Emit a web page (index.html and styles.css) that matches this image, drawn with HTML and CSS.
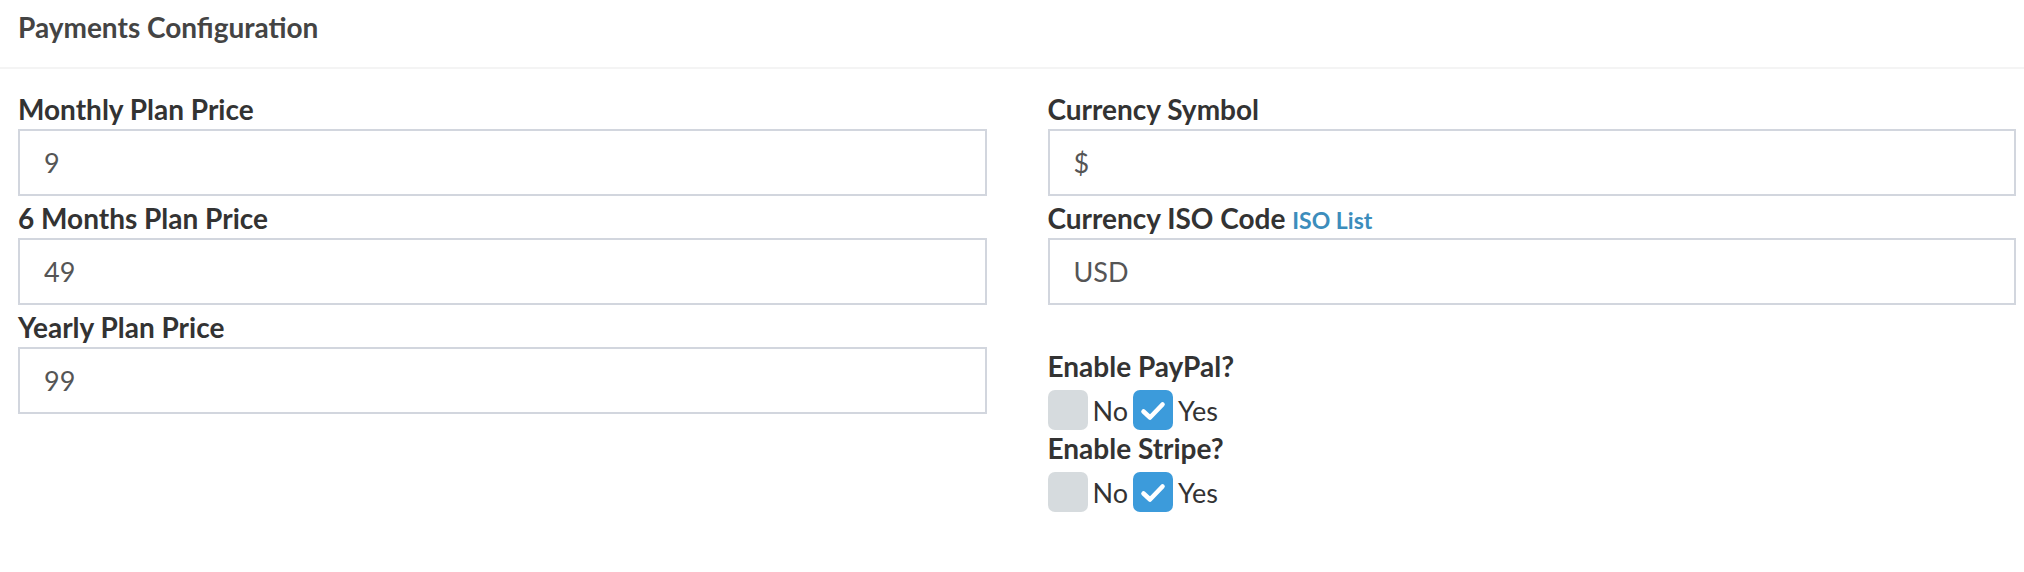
FILE: index.html
```html
<!DOCTYPE html>
<html>
<head>
<meta charset="utf-8">
<link rel="stylesheet" href="styles.css">
</head>
<body>
<div class="box">
  <div class="box-header">Payments Configuration</div>
  <div class="form">
    <div class="col">
      <label class="lbl">Monthly Plan Price</label>
      <div class="input">9</div>
      <label class="lbl">6 Months Plan Price</label>
      <div class="input">49</div>
      <label class="lbl">Yearly Plan Price</label>
      <div class="input">99</div>
    </div>
    <div class="col">
      <label class="lbl">Currency Symbol</label>
      <div class="input">$</div>
      <label class="lbl">Currency ISO Code <a class="link" href="#">ISO List</a></label>
      <div class="input">USD</div>
      <div class="checks">
        <label class="lbl lbl-check">Enable PayPal?</label>
        <div class="opts">
          <span class="cb"></span><span class="opt">No</span>
          <span class="cb on"><svg viewBox="0 0 40 40" width="40" height="40"><path d="M10.5 21.5 L17 27.5 L29.5 14.5" fill="none" stroke="#fff" stroke-width="4.6" stroke-linecap="round" stroke-linejoin="round"/></svg></span><span class="opt">Yes</span>
        </div>
        <label class="lbl lbl-check">Enable Stripe?</label>
        <div class="opts">
          <span class="cb"></span><span class="opt">No</span>
          <span class="cb on"><svg viewBox="0 0 40 40" width="40" height="40"><path d="M10.5 21.5 L17 27.5 L29.5 14.5" fill="none" stroke="#fff" stroke-width="4.6" stroke-linecap="round" stroke-linejoin="round"/></svg></span><span class="opt">Yes</span>
        </div>
      </div>
    </div>
  </div>
</div>
</body>
</html>
```

FILE: styles.css
```css
html, body {
  margin: 0;
  padding: 0;
  background: #fff;
}
body {
  font-family: Lato, "Open Sans", sans-serif;
  color: #333;
}
.box-header {
  box-sizing: border-box;
  height: 69px;
  padding: 14px 18px 0;
  font-size: 28px;
  line-height: 26px;
  font-weight: 700;
  color: #444;
  border-bottom: 2px solid #f4f4f4;
}
.form {
  display: grid;
  grid-template-columns: 1fr 1fr;
  column-gap: 61px;
  padding: 18px 8px 0 18px;
}
.col {
  display: flex;
  flex-direction: column;
}
.lbl {
  display: block;
  font-size: 28px;
  line-height: 42px;
  height: 42px;
  padding-top: 1px;
  box-sizing: border-box;
  font-weight: 700;
  color: #333;
  white-space: nowrap;
}
.lbl-check {
  height: 40px;
  line-height: 36px;
  padding-top: 0;
}
.link {
  color: #3c8dbc;
  text-decoration: none;
  font-size: 23px;
}
.input {
  box-sizing: border-box;
  height: 67px;
  border: 2px solid #d2d6de;
  padding: 0 24px;
  display: flex;
  align-items: center;
  font-size: 27px;
  color: #555;
}
.checks {
  margin-top: 43px;
}
.opts {
  display: flex;
  align-items: center;
  height: 40px;
  margin-top: 2px;
}
.cb {
  width: 40px;
  height: 40px;
  border-radius: 7px;
  background: #d6dbde;
  display: block;
  flex: none;
}
.cb.on {
  background: #3c9bdb;
}
.cb svg {
  display: block;
}
.opt {
  font-size: 27px;
  color: #333;
  margin: 0 5px 0 5px;
}
```
